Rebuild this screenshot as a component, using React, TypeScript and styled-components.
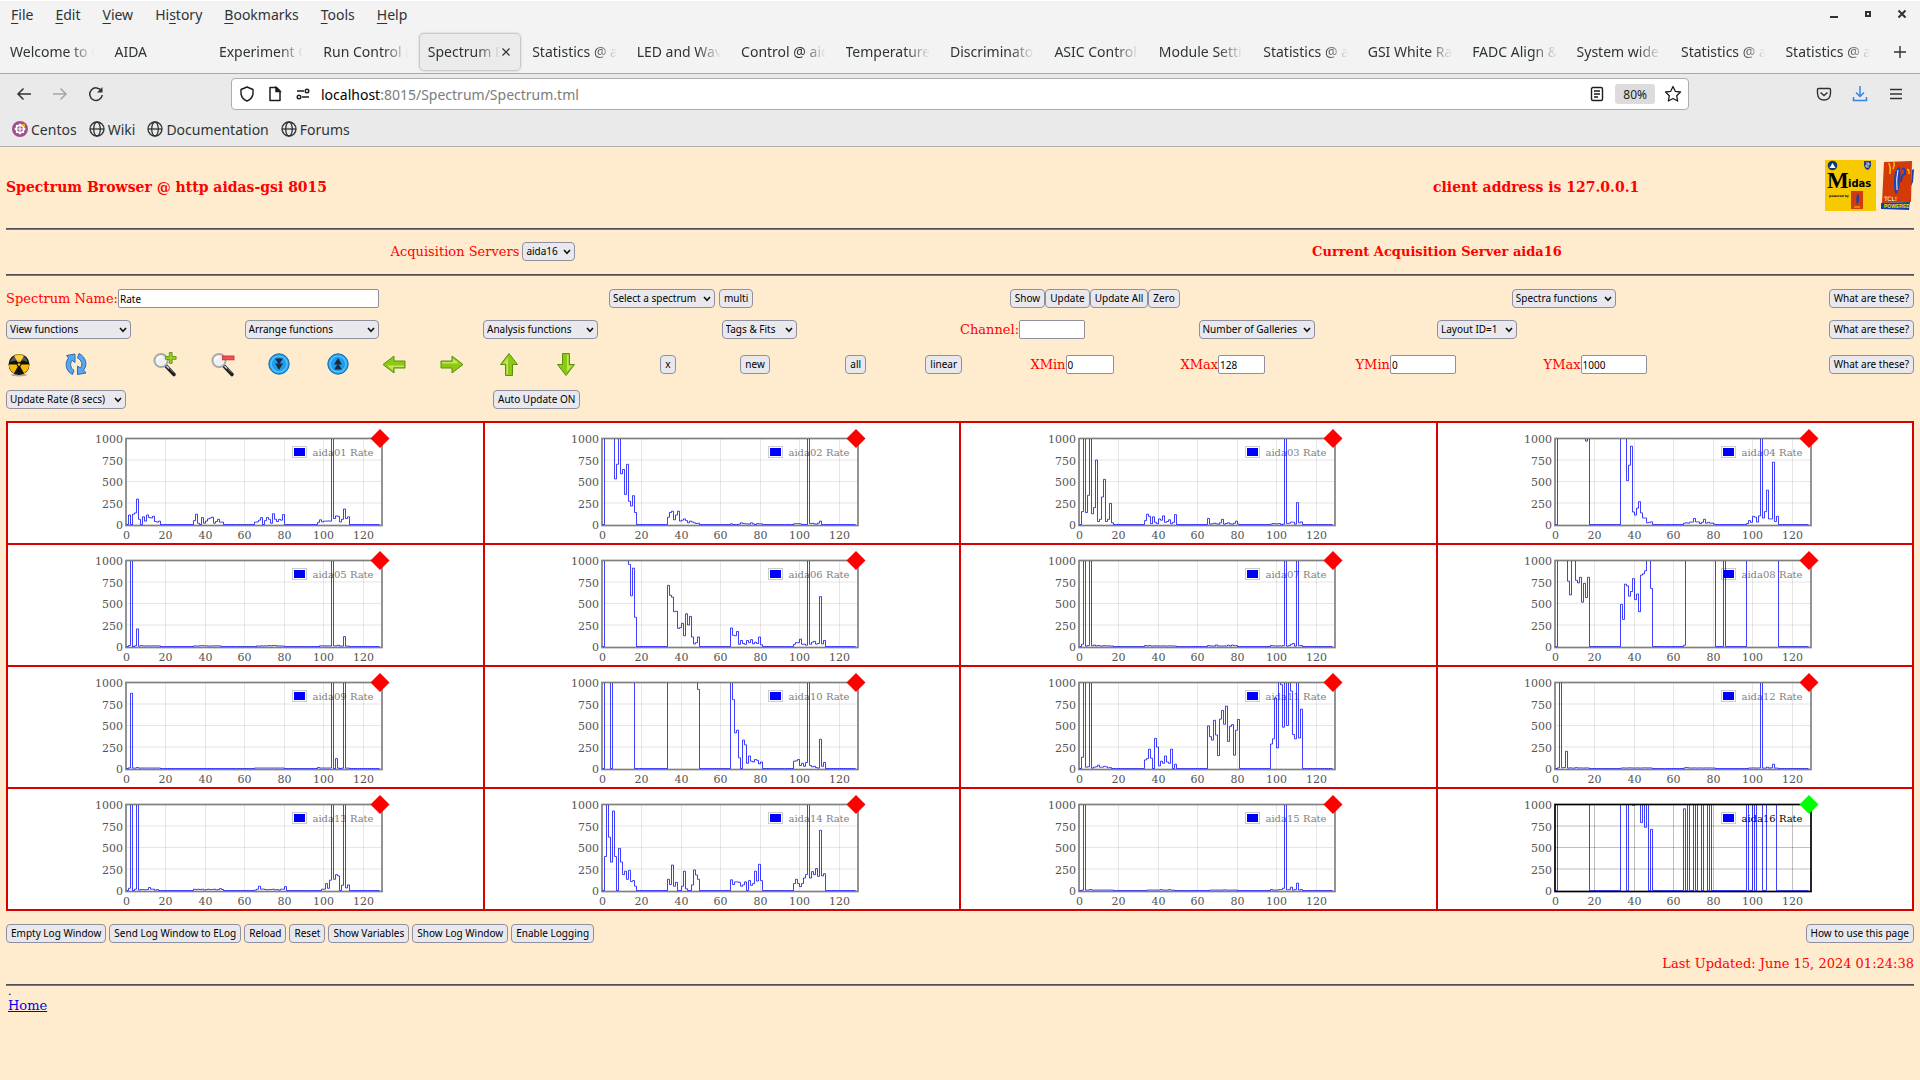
import React from "react";
import styled, { createGlobalStyle } from "styled-components";

const SANS = `"Noto Sans", "Open Sans", sans-serif`;
const SERIF = `"DejaVu Serif", serif`;
const INK = "#2e3436";

const Global = createGlobalStyle`
  * { box-sizing: border-box; }
  html { background: #ffebcd; }
  body { margin: 0; background: #ffebcd; font-family: ${SERIF}; font-size: 13px; color: red; }
`;

/* ---------- browser chrome ---------- */

const Chrome = styled.header`
  font-family: ${SANS};
  font-size: 14px;
  color: ${INK};
  border-bottom: 1px solid #b0b0b0;
`;

const TitleArea = styled.div`
  background: #f3f3f3;
  border-top: 1px solid #fff;
  border-bottom: 1px solid #a9a9a9;
`;

const MenuBar = styled.nav`
  display: flex;
  align-items: center;
  justify-content: space-between;
  height: 26px;
`;

const MenuItems = styled.div`
  display: flex;
`;

const MenuItem = styled.button`
  border: 0;
  background: none;
  padding: 0 11px;
  font: inherit;
  color: inherit;
  u { text-underline-offset: 3px; }
`;

const WindowButtons = styled.div`
  display: flex;
  gap: 14px;
  padding-right: 8px;
`;

const IconButton = styled.button<{ $small?: boolean }>`
  display: grid;
  place-items: center;
  width: ${(p) => (p.$small ? 12 : 20)}px;
  height: 20px;
  padding: 0;
  border: 0;
  background: none;
  color: inherit;
  flex: none;
`;

const TabStrip = styled.div`
  display: flex;
  align-items: center;
  height: 46px;
  padding-top: 3px;
`;

const Tab = styled.div<{ $active?: boolean }>`
  flex: 1 1 0;
  min-width: 0;
  display: flex;
  align-items: center;
  height: 36px;
  margin: 0 2px;
  padding: 0 8px;
  border-radius: 4px;
  background: ${(p) => (p.$active ? "#ebebeb" : "transparent")};
  box-shadow: ${(p) => (p.$active ? "0 0 2px 1px #b9b9c6" : "none")};
`;

const TabTitle = styled.span`
  flex: 1;
  min-width: 0;
  overflow: hidden;
  white-space: nowrap;
  mask-image: linear-gradient(to left, transparent 0, #000 24px);
`;

const NewTab = styled.div`
  width: 40px;
  display: grid;
  place-items: center;
`;

const ToolArea = styled.div`
  background: #eaeaea;
`;

const NavBar = styled.div`
  display: flex;
  align-items: center;
  height: 40px;
`;

const NavButtons = styled.div<{ $end?: boolean }>`
  flex: 1 1 0;
  display: flex;
  gap: 16px;
  padding: 0 14px;
  justify-content: ${(p) => (p.$end ? "flex-end" : "flex-start")};
`;

const UrlBar = styled.div`
  flex: 0 1 1458px;
  display: flex;
  align-items: center;
  gap: 8px;
  height: 32px;
  padding: 0 5px;
  background: #fff;
  border: 1px solid #adadad;
  border-radius: 4px;
  color: #1c1c1c;
`;

const Url = styled.div`
  flex: 1;
  color: #7c7c7c;
  b { font-weight: 400; color: #000; }
`;

const ZoomBadge = styled.button`
  height: 20px;
  padding: 0 8px;
  border: 0;
  border-radius: 3px;
  background: #dcdcdc;
  color: #222;
  font: 12px ${SANS};
`;

const Bookmarks = styled.nav`
  display: flex;
  align-items: center;
  gap: 12px;
  height: 32px;
  padding: 0 12px 2px;
`;

const Bookmark = styled.a`
  display: flex;
  align-items: center;
  gap: 3px;
  color: inherit;
  text-decoration: none;
`;

/* ---------- page ---------- */

const Page = styled.main`
  padding: 0 6px;
`;

const Banner = styled.div`
  display: flex;
  align-items: center;
  padding: 13px 0 17px;
`;

const Heading = styled.h1<{ $grow: number }>`
  flex: ${(p) => p.$grow} 1 0;
  margin: 0;
  padding-top: 2px;
  font-size: 14px;
  line-height: 20px;
`;

const Logos = styled.div`
  display: flex;
  gap: 5px;
`;

const Rule = styled.hr`
  margin: 0;
  border: 0;
  border-top: 1px solid #505058;
  border-bottom: 1px solid #77777c;
`;

const ServerRow = styled.div`
  display: grid;
  grid-template-columns: 1fr 1fr;
  align-items: center;
  justify-items: center;
  height: 44px;
  padding-bottom: 2px;
`;

const ServerTitle = styled.strong``;

const Controls = styled.div`
  display: flex;
  flex-direction: column;
  gap: 12px;
  padding: 13px 0 12px;
`;

const Row = styled.div<{ $cols: string; $tall?: boolean }>`
  display: grid;
  grid-template-columns: ${(p) => p.$cols};
  align-items: center;
  height: ${(p) => (p.$tall ? 27 : 19)}px;
`;

const Cell = styled.div<{ $gap?: number; $end?: boolean }>`
  display: flex;
  align-items: center;
  gap: ${(p) => p.$gap ?? 0}px;
  justify-content: ${(p) => (p.$end ? "flex-end" : "flex-start")};
  white-space: nowrap;
`;

const Button = styled.button`
  height: 19px;
  padding: 0 4px;
  border: 1px solid #8f8f9d;
  border-radius: 4px;
  background: #e9e9ed;
  color: #000;
  font: 10px/15px ${SANS};
  white-space: nowrap;
`;

const PickerBox = styled.span`
  position: relative;
  display: inline-block;
  height: 19px;
  svg { position: absolute; right: 4px; top: 7px; pointer-events: none; }
`;

const PickerSelect = styled.select<{ $w: number }>`
  appearance: none;
  width: ${(p) => p.$w}px;
  height: 19px;
  padding: 0 3px;
  border: 1px solid #8f8f9d;
  border-radius: 4px;
  background: #e9e9ed;
  color: #000;
  font: 10px/15px ${SANS};
`;

const Input = styled.input<{ $w: number }>`
  width: ${(p) => p.$w}px;
  height: 19px;
  padding: 0 1px;
  border: 1px solid #8f8f9d;
  border-radius: 2px;
  background: #fff;
  color: #000;
  font: 10px/15px ${SANS};
`;

const ToolButton = styled.button`
  display: block;
  width: 26px;
  height: 27px;
  padding: 0;
  border: 0;
  background: none;
  svg { display: block; }
`;

const Gallery = styled.table`
  width: 100%;
  table-layout: fixed;
  border-collapse: collapse;
  border: 2px solid #d80000;
  background: #fff;
`;

const GalleryCell = styled.td`
  height: 122px;
  padding: 0;
  border: 2px solid #d80000;
  text-align: center;
  vertical-align: top;
  svg { display: inline-block; vertical-align: top; }
`;

const LogBar = styled.div`
  display: flex;
  gap: 3px;
  padding-top: 13px;
`;

const Spacer = styled.span`
  flex: 1;
`;

const Updated = styled.p`
  margin: 12px 0;
  line-height: 17px;
  text-align: right;
`;

const Footer = styled.footer`
  padding: 0 2px;
  line-height: 15px;
  color: #000;
  div { font-size: 11px; line-height: 12px; }
  a { color: #0000ee; }
`;

/* ---------- chart data ---------- */

/* "channel:value value value; channel:value ..." ; anything not listed is zero */
const SPECTRA: string[] = [
  "1:110 0 120 135 295 60 0 90 40 110 80 75 95 35 28 40;34:45 120 15 0 80 15 40 65 75 85 15 35 60 28 28;65:28 30 50 80 0 45 80 60 15 125 60 35 60 50 115;97:25 55 30 38 40 42 38 2000 70 100 95 30 60 180 70 90",
  "1:2000 2000 2000 2000 2000 530 700 2000 590 640 350 700 270 215 335 140;33:85 140 155 55 110 155 40 50 65 45 20 40 30 20 12 15;65:8 0 0 0 5 20 12 8 8 5 20 8 0 10 8 8;97:8 10 10 8 0 0 0 2000 12 15 8 5 15 40",
  "1:150 2000 140 340 2000 125 195 750 35 60 320 525 35 60 245 20;33:45 120 95 10 90 25 10 65 50 100 25 35 55 8 25 115;65:70 5 8 15 8 5 20 60 5 12 20 8 5 15 38 5;97:5 12 8 8 12 0 5 2000 10 15 28 28 5 255 20 30",
  "1:2000 2000 2000 2000 2000 2000 2000 2000 2000 2000 2000 2000 2000 2000 970 2000;33:2000 2000 2000 510 690 910 145 110 190 265 135 75 75 20 25 30;65:15 20 15 28 28 70 30 30 12 25 60 15 25 15 18 5;97:10 45 25 95 85 28 100 2000 75 150 400 65 65 725 35 95",
  "1:12 2000 0 8 205 5 10 7 6 8 7 6 8 7 6 7;34:7 6 6 8 10 8 8 6 6 7 8 8 8 6;66:7 5 8 6 8 8 12 7 12 12 6 7 6 6;98:8 8 8 6 8 6 2000 8 8 15 5 5 115 5 5",
  "1:2000 2000 2000 2000 2000 2000 2000 2000 2000 2000 2000 2000 955 590 910 340;33:710 595 575 405 410 210 220 270 125 380 250 350 110 30 45 110;65:215 130 125 175 25 70 35 25 70 45 80 30 50 35 110 20;97:25 45 45 85 25 28 15 2000 25 50 60 28 35 580 30 70",
  "1:25 2000 5 10 2000 8 18 6 12 7 6 10 7 8 6 6;33:12 6 12 6 6 8 6 7 6 8 6 6 8 7 6 6;65:12 7 6 6 18 7 6 6 7 6 15 6 18 10 10;97:12 8 7 6 8 6 10 2000 5 10 25 35 5 2000 10 12",
  "1:2000 2000 2000 2000 2000 760 600 2000 2000 770 740 805 515 735 570 805;33:490 315 725 705 585 640 790 545 610 405 830 845 880 2000 2000 675;65:15 2000 2000 2000 2000 2000 2000 2000 2000 2000 2000 2000 2000 2000 2000 2000 0 0 0 0 2000;97:2000 2000 2000 2000 2000 2000 2000 2000 2000 2000 2000 2000 2000 2000 2000 2000",
  "1:8 875 5 5 12 5 6 6 6 6 6 6 6 6 6 6;65:6 6 6 6 6 6 6 6 6 6 6 6 6 6 6;97:12 6 6 6 6 6 6 2000 0 115 5 0 5 2000 5 5",
  "1:2000 2000 2000 0 2000 2000 2000 2000 2000 2000 2000 2000 2000 2000 2000;33:2000 2000 2000 2000 2000 2000 2000 2000 2000 2000 2000 2000 2000 2000 2000 920;65:2000 800 415 445 125 0 330 275 60 145 85 75 105 95 55 75;97:85 90 105 35 60 25 70 2000 35 20 25 10 5 340 25 70",
  "1:130 2000 15 20 2000 5 15 20 38 15 15 25 20 8 10;33:100 115 225 120 0 350 250 30 85 60 145 75 60 225 0 50;65:495 370 330 560 390 150 575 675 515 725 315 490 510 155 445 570;97:285 345 820 240 2000 975 480 2000 500 2000 900 395 345 2000 355 690",
  "1:8 2000 8 12 200 5 8 5 6 10 6 7 6 6 7 6;33:5 7 6 6 8 7 6 6 7 6 6 7 8 6 7 6;65:6 12 8 6 6 7 6 6 7 6 6 7 6 7 6 6;98:6 6 7 6 6 7 2000 5 5 15 5 8 50 5 5",
  "1:25 2000 0 15 2000 5 12 10 8 12 35 15 15 5 10;34:15 10 15 10 15 7 10 15 10 12 15 8 10 22 12;65:5 15 50 15 18 12 8 10 12 15 8 10 5 15 15 45;99:15 15 80 25 120 2000 130 185 170 0 60 2000 30 65",
  "1:395 2000 620 330 925 395 0 490 330 185 225 130 235 105 115 50;33:130 70 295 50 95 0 0 50 225 20 0 0 65 240 180 130;65:125 70 100 100 95 50 65 100 0 115 60 80 225 110 305 115;97:80 130 80 45 80 145 185 2000 145 220 185 255 165 700 170 195",
  "1:5 2000 5 5 12 5 5 5 6 5 5 6 5 5 6 5;34:5 6 6 5 6 5 5 10 5 5 5 10 5 5;66:5 5 5 6 5 5 5 8 5 5 5 5 6 5;97:12 5 5 5 10 12 25 2000 8 10 38 5 10 85 5 12",
  "1:2000 2000 2000 2000 2000 2000 2000 2000 2000 2000 2000 2000 2000 2000 2000 2000;33:2000 2000 2000 0 2000 2000 990 2000 2000 2000 790 2000 735 2000 0 710;65:950 0 2000 0 0 2000 0 2000 2000 0 2000 2000 0 2000 0 0;97:2000 0 0 2000 0 2000 2000 2000 0 0 2000 2000 2000 2000 2000 0",
];

/* Channel edges fall on pixel centres so that one-pixel strokes stay sharp. */
const X0 = 31.5;
const Y0 = 101.5;
const STEP = 1.973;
const xOf = (c: number) => X0 + Math.round(c * STEP);
const yOf = (v: number) => Y0 - Math.min(v, 1050) * 0.086;

function tracePath(spec: string): string {
  const values: number[] = new Array(128).fill(0);
  spec.split(";").forEach((run) => {
    const [start, list] = run.split(":");
    list.split(" ").forEach((v, i) => {
      values[Number(start) + i] = Number(v);
    });
  });
  let d = `M${xOf(0)} ${yOf(0)}`;
  values.forEach((v, c) => {
    d += `V${yOf(v).toFixed(1)}H${xOf(c + 1)}`;
  });
  return d;
}

function Chart({ index }: { index: number }) {
  const active = index === 15;
  const name = `aida${String(index + 1).padStart(2, "0")} Rate`;
  const clip = `plot-${index}`;
  return (
    <svg width="301" height="120" viewBox="0 0 301 120" role="img" aria-label={name} fontFamily="DejaVu Serif, serif" fontSize="11">
      <clipPath id={clip}>
        <rect x="31" y="16" width="256" height="88" />
      </clipPath>
      <g stroke={active ? "#000" : "#545454"} strokeOpacity={active ? 0.25 : 0.15}>
        {[20, 40, 60, 80, 100, 120].map((c) => (
          <line key={c} x1={xOf(c)} x2={xOf(c)} y1="16" y2="102" />
        ))}
        {[250, 500, 750].map((v) => (
          <line key={v} x1="31" x2="287" y1={yOf(v)} y2={yOf(v)} />
        ))}
      </g>
      <rect x="31" y="15.5" width="256" height="87" fill="none" stroke={active ? "#000" : "#808080"} strokeWidth="1.7" />
      <rect x="197.5" y="23.5" width="14" height="11" fill="#fff" stroke="#ccc" />
      <rect x="199" y="25" width="11" height="8" fill="#00f" />
      <text x="248" y="33" fontSize="10" textAnchor="middle" fill={active ? "#000" : "#808080"}>{name}</text>
      <path d={tracePath(SPECTRA[index])} clipPath={`url(#${clip})`} fill="none" stroke="#00f" strokeOpacity="0.75" />
      <path d="M285 6L294.500 15.500L285 25L275.500 15.500Z" fill={active ? "#0f0" : "#f00"} />
      <g fill="#545454">
        {[0, 250, 500, 750, 1000].map((v) => (
          <text key={v} x="28" y={yOf(v) + 4.5} textAnchor="end">{v}</text>
        ))}
        {[0, 20, 40, 60, 80, 100, 120].map((c) => (
          <text key={c} x={xOf(c)} y="116" textAnchor="middle">{c}</text>
        ))}
      </g>
    </svg>
  );
}

/* ---------- small drawings ---------- */

function Picker({ label, w }: { label: string; w: number }) {
  return (
    <PickerBox>
      <PickerSelect $w={w} aria-label={label} defaultValue={label}>
        <option>{label}</option>
      </PickerSelect>
      <svg width="8" height="6" viewBox="0 0 8 6">
        <path d="M1 1L4 4.300L7 1" fill="none" stroke="#111" strokeWidth="1.6" />
      </svg>
    </PickerBox>
  );
}

function Field({ label, id, value, w }: { label: string; id: string; value: string; w: number }) {
  return (
    <Cell>
      <label htmlFor={id}>{label}</label>
      <Input id={id} $w={w} defaultValue={value} />
    </Cell>
  );
}

const Globe = () => (
  <svg width="16" height="16" viewBox="0 0 16 16" fill="none" stroke={INK} strokeWidth="1.300">
    <circle cx="8" cy="8" r="7" />
    <ellipse cx="8" cy="8" rx="3.300" ry="7" />
    <path d="M1 8H15" />
  </svg>
);

const CentosMark = () => (
  <svg width="16" height="16" viewBox="0 0 16 16">
    <circle cx="8" cy="8" r="8" fill="#a14f8c" />
    <g fill="none" stroke="#fff" strokeWidth="1.200">
      <rect x="4.500" y="4.500" width="7" height="7" />
      <rect x="4.500" y="4.500" width="7" height="7" transform="rotate(45 8 8)" />
      <path d="M8 3V13M3 8H13" />
    </g>
    <path d="M9 3L13 3L13 7Z" fill="#efa724" />
  </svg>
);

function Lens({ plus }: { plus?: boolean }) {
  return (
    <svg width="26" height="27" viewBox="0 0 26 27">
      <path d="M14 15L22 23.500" stroke="#222" strokeWidth="3.600" strokeLinecap="round" />
      <path d="M14.500 15L17 17.500" stroke="#ccc" strokeWidth="1.600" />
      <path d="M17.500 17.500L21.500 21.500" stroke="#888" strokeWidth="0.800" />
      <circle cx="9" cy="9.500" r="6.600" fill="#eef0f2" stroke="#a9a9a9" strokeWidth="2" />
      <path d="M5.500 9.500A3.800 3.800 0 0 1 10 5.800" stroke="#fff" strokeWidth="1.600" fill="none" />
      {plus ? (
        <path d="M17.300 1.500h2.800v4h4v2.800h-4v4h-2.800v-4h-4v-2.800h4z" fill="#9cd01c" stroke="#5e930c" strokeWidth="0.900" />
      ) : (
        <rect x="12.500" y="5" width="11.500" height="3.800" fill="#ef5350" stroke="#d32f2f" strokeWidth="0.900" />
      )}
    </svg>
  );
}

function BlueDisc({ up }: { up?: boolean }) {
  return (
    <svg width="26" height="27" viewBox="0 0 26 27">
      <circle cx="12" cy="13" r="10.200" fill="#1e9df0" stroke="#1769a8" strokeWidth="1" />
      <circle cx="12" cy="13" r="8" fill="none" stroke="#4fc0ff" strokeWidth="1.600" />
      <g transform={up ? "rotate(180 12 13)" : undefined} fill="#1d2a3a">
        <path d="M8 7.500H16L12 13.500Z" />
        <path d="M8 12.500H16L12 19Z" />
      </g>
    </svg>
  );
}

function GreenArrow({ turn }: { turn: number }) {
  return (
    <svg width="26" height="27" viewBox="0 0 26 27">
      <g transform={`rotate(${turn} 12 13.500)`}>
        <path d="M1 10H12V5L23 13.500L12 22V17H1Z" fill="#8cc814" stroke="#5a8f10" strokeWidth="1" strokeLinejoin="round" />
        <path d="M2 11H13V7.500L19 12.500H2Z" fill="#c3e65a" />
      </g>
    </svg>
  );
}

const Radiation = () => (
  <svg width="26" height="27" viewBox="0 0 26 27">
    <ellipse cx="13" cy="24" rx="8" ry="1.500" fill="#b8a88c" />
    <circle cx="13" cy="13.500" r="10.500" fill="#111" />
    <g fill="#f8bd00">
      {[0, 120, 240].map((a) => (
        <path key={a} transform={`rotate(${a} 13 13.500)`} d="M13 13.500L8 4.800A10 10 0 0 1 18 4.800Z" />
      ))}
    </g>
    <circle cx="13" cy="13.500" r="2.400" fill="#111" />
    <circle cx="13" cy="13.500" r="1.300" fill="#f8bd00" />
    <path d="M4 11A9.500 9.500 0 0 1 22 11A14 8 0 0 0 4 11Z" fill="#fff" opacity="0.300" />
  </svg>
);

const Refresh = () => (
  <svg width="26" height="27" viewBox="0 0 26 27" fill="#5aa6ea" stroke="#2b6cb8" strokeWidth="1">
    <path d="M8.500 23.500C1.500 20 0.500 12 4.500 7L2.500 4.500L11 3V11.500L8 9.300C5.500 13 6.500 17 10 19.500Z" />
    <path d="M15 2.500C22 6 24 14 19.500 19L22 22L13.500 23.500V15L16.500 17C19 13 17.500 9 13.500 7Z" />
  </svg>
);

const MidasLogo = () => (
  <svg width="51" height="51" viewBox="0 0 51 51" role="img" aria-label="Midas">
    <rect width="51" height="51" fill="#f7c900" />
    <circle cx="7.500" cy="5.500" r="4.800" fill="#123a7a" />
    <path d="M4.500 8L7.500 3L10.500 8Z" fill="#fff" />
    <path d="M39 1H46V6Q45 9 42.500 10Q40 9 39 6Z" fill="#20407f" />
    <path d="M41 3h3v2h-3v2h3" fill="none" stroke="#fff" strokeWidth="0.800" />
    <text x="2" y="28" fontFamily="Liberation Serif, serif" fontWeight="700" fontSize="23" fill="#000">M</text>
    <text x="23" y="27" fontFamily="DejaVu Sans, sans-serif" fontWeight="700" fontSize="10" fill="#000">idas</text>
    <text x="4" y="37" fontFamily="DejaVu Sans, sans-serif" fontWeight="700" fontSize="3" fill="#000">powered by</text>
    <rect x="26" y="31" width="12" height="18" fill="#d43a10" />
    <path d="M33 33Q30 38 32 45Q36 40 33 33Z" fill="#24409c" />
    <path d="M29 47h6" stroke="#f7c900" strokeWidth="1" />
  </svg>
);

const TclLogo = () => (
  <svg width="33" height="51" viewBox="0 0 33 51" role="img" aria-label="Tcl powered">
    <path d="M3 2L31 1L30 42L1 43Z" fill="#d43a06" />
    <path d="M0 43L29 42L28 50L0 49Z" fill="#1440a8" />
    <path d="M31 10L33 9L32 22L30 26Z" fill="#1440a8" />
    <path d="M19 6Q13 10 13 20Q12 28 15 35Q19 28 19 20Q20 12 19 6Z" fill="#1c44b4" />
    <path d="M21 9Q25 8 24 14Q20 15 20 22" fill="none" stroke="#1c44b4" strokeWidth="2" />
    <path d="M17 10Q15 18 16 30" fill="none" stroke="#fff" strokeWidth="1" />
    <path d="M8 3Q10 8 9 14M13 2Q14 5 12 9M26 10Q28 8 28 14" fill="none" stroke="#f5c400" strokeWidth="1.500" />
    <text x="3" y="41" fontFamily="DejaVu Sans, sans-serif" fontSize="6" fill="#fff">TCL!</text>
    <text x="3" y="48" fontFamily="Liberation Sans, sans-serif" fontWeight="700" fontSize="5" fill="#f7e000">POWERED</text>
  </svg>
);

/* ---------- content ---------- */

const MENUS = ["File", "Edit", "View", "History", "Bookmarks", "Tools", "Help"];
const ACCESS_KEY: Record<string, number> = { History: 2 };

const TABS = [
  "Welcome to C", "AIDA", "Experiment C", "Run Control (", "Spectrum B", "Statistics @ a",
  "LED and Wav", "Control @ aid", "Temperature", "Discriminator", "ASIC Control", "Module Settin",
  "Statistics @ a", "GSI White Ra", "FADC Align &", "System wide", "Statistics @ a", "Statistics @ a",
];

const LOG_BUTTONS = [
  "Empty Log Window", "Send Log Window to ELog", "Reload", "Reset", "Show Variables", "Show Log Window", "Enable Logging",
];

function Browser() {
  return (
    <Chrome>
      <TitleArea>
        <MenuBar>
          <MenuItems>
            {MENUS.map((m) => {
              const k = ACCESS_KEY[m] ?? 0;
              return (
                <MenuItem key={m}>
                  {m.slice(0, k)}<u>{m[k]}</u>{m.slice(k + 1)}
                </MenuItem>
              );
            })}
          </MenuItems>
          <WindowButtons>
            <IconButton aria-label="Minimize">
              <svg width="10" height="10"><path d="M1 8H9" stroke={INK} strokeWidth="2" /></svg>
            </IconButton>
            <IconButton aria-label="Restore">
              <svg width="10" height="10"><rect x="3" y="3" width="4" height="4" fill="none" stroke={INK} strokeWidth="2" /></svg>
            </IconButton>
            <IconButton aria-label="Close">
              <svg width="10" height="10"><path d="M1.500 1.500L8.500 8.500M8.500 1.500L1.500 8.500" stroke={INK} strokeWidth="2" /></svg>
            </IconButton>
          </WindowButtons>
        </MenuBar>
        <TabStrip>
          {TABS.map((t, i) => (
            <Tab key={i} $active={i === 4}>
              <TabTitle>{t}</TabTitle>
              {i === 4 && (
                <IconButton $small aria-label="Close tab">
                  <svg width="10" height="10"><path d="M1.500 1.500L8.500 8.500M8.500 1.500L1.500 8.500" stroke={INK} strokeWidth="1.200" /></svg>
                </IconButton>
              )}
            </Tab>
          ))}
          <NewTab>
            <IconButton aria-label="New tab">
              <svg width="14" height="14"><path d="M7 1V13M1 7H13" stroke={INK} strokeWidth="1.400" /></svg>
            </IconButton>
          </NewTab>
        </TabStrip>
      </TitleArea>
      <ToolArea>
        <NavBar>
          <NavButtons>
            <IconButton aria-label="Back">
              <svg width="16" height="16" fill="none" stroke={INK} strokeWidth="1.500"><path d="M15 8H2M7.500 2.500L2 8L7.500 13.500" /></svg>
            </IconButton>
            <IconButton aria-label="Forward">
              <svg width="16" height="16" fill="none" stroke="#a4a6a7" strokeWidth="1.500"><path d="M1 8H14M8.500 2.500L14 8L8.500 13.500" /></svg>
            </IconButton>
            <IconButton aria-label="Reload">
              <svg width="16" height="16" fill="none" stroke={INK} strokeWidth="1.500"><path d="M13.500 5A6.300 6.300 0 1 0 14.300 9" /><path d="M14.500 1V6.500H9Z" fill={INK} stroke="none" /></svg>
            </IconButton>
          </NavButtons>
          <UrlBar>
            <IconButton aria-label="Tracking protection">
              <svg width="16" height="16" fill="none" stroke="#1c1c1c" strokeWidth="1.400"><path d="M8 1L14 3.500V8Q13 13 8 15Q3 13 2 8V3.500Z" strokeLinejoin="round" /></svg>
            </IconButton>
            <IconButton aria-label="Site information">
              <svg width="16" height="16" fill="none" stroke="#1c1c1c" strokeWidth="1.500"><path d="M3 1.500H9.500L13 5V14.500H3Z" strokeLinejoin="round" /><path d="M9 1.500V5.500H13Z" fill="#1c1c1c" /></svg>
            </IconButton>
            <IconButton aria-label="Permissions">
              <svg width="16" height="16" fill="none" stroke="#1c1c1c" strokeWidth="1.400"><path d="M2 5H9M7 11H14" /><circle cx="12" cy="5" r="1.800" /><circle cx="4" cy="11" r="1.800" /></svg>
            </IconButton>
            <Url><b>localhost</b>:8015/Spectrum/Spectrum.tml</Url>
            <IconButton aria-label="Reader view">
              <svg width="16" height="16" fill="none" stroke="#1c1c1c" strokeWidth="1.400"><rect x="2.500" y="1.500" width="11" height="13" rx="1.500" /><path d="M5 5H11M5 8H11M5 11H9" /></svg>
            </IconButton>
            <ZoomBadge>80%</ZoomBadge>
            <IconButton aria-label="Bookmark this page">
              <svg width="18" height="18" fill="none" stroke="#1c1c1c" strokeWidth="1.300" strokeLinejoin="round"><path d="M9 1.500L11.300 6.300L16.500 7L12.700 10.700L13.600 16L9 13.500L4.400 16L5.300 10.700L1.500 7L6.700 6.300Z" /></svg>
            </IconButton>
          </UrlBar>
          <NavButtons $end>
            <IconButton aria-label="Pocket">
              <svg width="16" height="16" fill="none" stroke={INK} strokeWidth="1.400"><path d="M2.500 2.500H13.500Q14.500 2.500 14.500 3.500V7.500Q14 14 8 14Q2 14 1.500 7.500V3.500Q1.500 2.500 2.500 2.500Z" /><path d="M4.500 6.500L8 9.500L11.500 6.500" /></svg>
            </IconButton>
            <IconButton aria-label="Downloads">
              <svg width="16" height="18" fill="none" stroke="#3584e4" strokeWidth="1.500"><path d="M8 1V11M4 7.500L8 11.500L12 7.500M1.500 12V15.500H14.500V12" /></svg>
            </IconButton>
            <IconButton aria-label="Application menu">
              <svg width="14" height="12" stroke={INK} strokeWidth="1.400"><path d="M1 1.500H13M1 6H13M1 10.500H13" /></svg>
            </IconButton>
          </NavButtons>
        </NavBar>
        <Bookmarks>
          <Bookmark href="#centos"><CentosMark />Centos</Bookmark>
          <Bookmark href="#wiki"><Globe />Wiki</Bookmark>
          <Bookmark href="#documentation"><Globe />Documentation</Bookmark>
          <Bookmark href="#forums"><Globe />Forums</Bookmark>
        </Bookmarks>
      </ToolArea>
    </Chrome>
  );
}

const TOOLS: [string, React.ReactNode][] = [
  ["Reset all", <Radiation />],
  ["Refresh", <Refresh />],
  ["Zoom in", <Lens plus />],
  ["Zoom out", <Lens />],
  ["Scale down", <BlueDisc />],
  ["Scale up", <BlueDisc up />],
  ["Left", <GreenArrow turn={180} />],
  ["Right", <GreenArrow turn={0} />],
  ["Up", <GreenArrow turn={270} />],
  ["Down", <GreenArrow turn={90} />],
];

export default function App() {
  return (
    <>
      <Global />
      <Browser />
      <Page>
        <Banner>
          <Heading $grow={1427}>Spectrum Browser @ http aidas-gsi 8015</Heading>
          <Heading $grow={392}>client address is 127.0.0.1</Heading>
          <Logos><MidasLogo /><TclLogo /></Logos>
        </Banner>
        <Rule />
        <ServerRow>
          <Cell $gap={3}>Acquisition Servers <Picker label="aida16" w={53} /></Cell>
          <ServerTitle>Current Acquisition Server aida16</ServerTitle>
        </ServerRow>
        <Rule />
        <Controls>
          <Row $cols="603fr 401fr 502fr 317fr auto">
            <Field label="Spectrum Name:" id="name" value="Rate" w={261} />
            <Cell $gap={4}><Picker label="Select a spectrum" w={106} /><Button>multi</Button></Cell>
            <Cell><Button>Show</Button><Button>Update</Button><Button>Update All</Button><Button>Zero</Button></Cell>
            <Cell><Picker label="Spectra functions" w={104} /></Cell>
            <Cell $end><Button>What are these?</Button></Cell>
          </Row>
          <Row $cols="repeat(8, minmax(0, 1fr))">
            <Cell><Picker label="View functions" w={125} /></Cell>
            <Cell><Picker label="Arrange functions" w={134} /></Cell>
            <Cell><Picker label="Analysis functions" w={115} /></Cell>
            <Cell><Picker label="Tags & Fits" w={75} /></Cell>
            <Field label="Channel:" id="channel" value="" w={66} />
            <Cell><Picker label="Number of Galleries" w={116} /></Cell>
            <Cell><Picker label="Layout ID=1" w={80} /></Cell>
            <Cell $end><Button>What are these?</Button></Cell>
          </Row>
          <Row $tall $cols="58fr 88fr 58fr 57fr 59fr 56fr 58fr 57fr 57fr 106fr 80fr 105fr 80fr 105fr 150fr 175fr 188fr 285fr auto">
            {TOOLS.map(([name, icon]) => (
              <ToolButton key={name} aria-label={name}>{icon}</ToolButton>
            ))}
            <Cell><Button>x</Button></Cell>
            <Cell><Button>new</Button></Cell>
            <Cell><Button>all</Button></Cell>
            <Cell><Button>linear</Button></Cell>
            <Field label="XMin" id="xmin" value="0" w={48} />
            <Field label="XMax" id="xmax" value="128" w={47} />
            <Field label="YMin" id="ymin" value="0" w={66} />
            <Field label="YMax" id="ymax" value="1000" w={66} />
            <Cell $end><Button>What are these?</Button></Cell>
          </Row>
          <Row $cols="487fr 1421fr">
            <Cell><Picker label="Update Rate (8 secs)" w={120} /></Cell>
            <Cell><Button>Auto Update ON</Button></Cell>
          </Row>
        </Controls>
        <Gallery>
          <tbody>
            {[0, 1, 2, 3].map((r) => (
              <tr key={r}>
                {[0, 1, 2, 3].map((c) => (
                  <GalleryCell key={c}><Chart index={r * 4 + c} /></GalleryCell>
                ))}
              </tr>
            ))}
          </tbody>
        </Gallery>
        <LogBar>
          {LOG_BUTTONS.map((b) => <Button key={b}>{b}</Button>)}
          <Spacer />
          <Button>How to use this page</Button>
        </LogBar>
        <Updated>Last Updated: June 15, 2024 01:24:38</Updated>
        <Rule />
        <Footer>
          <div>.</div>
          <a href="#home">Home</a>
        </Footer>
      </Page>
    </>
  );
}
